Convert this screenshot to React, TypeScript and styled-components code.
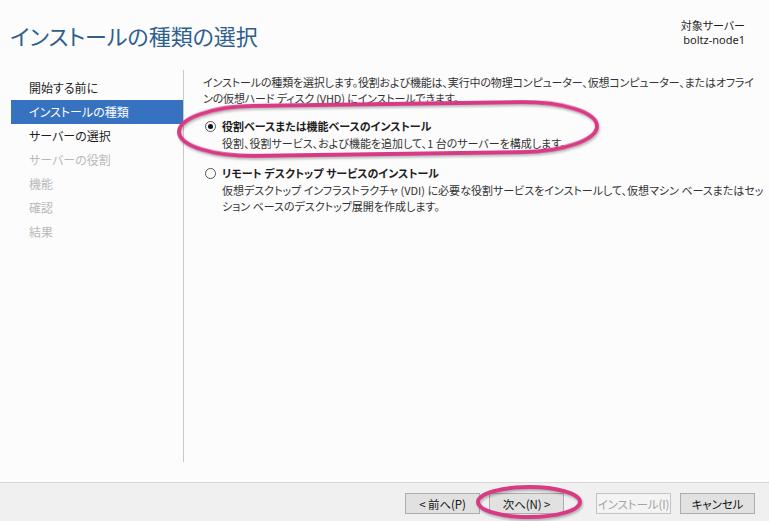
import React from 'react'
import styled, { createGlobalStyle } from 'styled-components'

const steps: { label: string; state: 'done' | 'active' | 'todo' }[] = [
  { label: '開始する前に', state: 'done' },
  { label: 'インストールの種類', state: 'active' },
  { label: 'サーバーの選択', state: 'done' },
  { label: 'サーバーの役割', state: 'todo' },
  { label: '機能', state: 'todo' },
  { label: '確認', state: 'todo' },
  { label: '結果', state: 'todo' },
]

const options = [
  {
    title: '役割ベースまたは機能ベースのインストール',
    desc: ['役割、役割サービス、および機能を追加して、1 台のサーバーを構成します。'],
    checked: true,
  },
  {
    title: 'リモート デスクトップ サービスのインストール',
    desc: [
      '仮想デスクトップ インフラストラクチャ (VDI) に必要な役割サービスをインストールして、仮想マシン ベースまたはセッ',
      'ション ベースのデスクトップ展開を作成します。',
    ],
    checked: false,
  },
]

const App: React.FC = () => {
  return (
    <Page>
      <GlobalStyle />
      <Header>
        <Title>インストールの種類の選択</Title>
        <Target>
          <div>対象サーバー</div>
          <div>boltz-node1</div>
        </Target>
      </Header>
      <Main>
        <Sidebar>
          {steps.map(s => (
            <Step key={s.label} state={s.state}>
              {s.label}
            </Step>
          ))}
        </Sidebar>
        <Content>
          <Intro>
            インストールの種類を選択します。役割および機能は、実行中の物理コンピューター、仮想コンピューター、またはオフライ
            <br />
            ンの仮想ハード ディスク (VHD) にインストールできます。
          </Intro>
          {options.map(o => (
            <Option key={o.title}>
              <Radio checked={o.checked} />
              <OptionBody>
                <OptionTitle>{o.title}</OptionTitle>
                {o.desc.map(d => (
                  <OptionDesc key={d}>{d}</OptionDesc>
                ))}
              </OptionBody>
            </Option>
          ))}
        </Content>
      </Main>
      <Footer>
        <ButtonGroup>
          <Button>&lt; 前へ(P)</Button>
          <Button>次へ(N) &gt;</Button>
        </ButtonGroup>
        <ButtonGroup>
          <Button disabled>インストール(I)</Button>
          <Button>キャンセル</Button>
        </ButtonGroup>
      </Footer>
      <Mark style={{ left: 174, top: 99, width: 428, height: 60 }} viewBox="0 0 428 60">
        <rect x="5" y="5" width="418" height="50" rx="75" ry="25" transform="rotate(-0.8 214 30)" />
      </Mark>
      <Mark style={{ left: 474, top: 483, width: 110, height: 38 }} viewBox="0 0 110 38">
        <ellipse cx="55" cy="19" rx="51" ry="15" />
      </Mark>
    </Page>
  )
}

export default App

const GlobalStyle = createGlobalStyle`
  body {
    margin: 0;
    background: #fcfcfc;
    font-family: "Noto Sans CJK JP", "Noto Sans", sans-serif;
    font-feature-settings: "palt";
  }
`

const Page = styled.div`
  position: relative;
  width: 769px;
  height: 521px;
  display: flex;
  flex-direction: column;
  background: #fcfcfc;
  overflow: hidden;
`

const Header = styled.div`
  height: 70px;
  flex: none;
  display: flex;
  justify-content: space-between;
  align-items: flex-start;
  padding: 0 24px 0 10px;
  box-sizing: border-box;
`

const Title = styled.h1`
  margin: 20px 0 0;
  font-size: 22px;
  font-weight: 400;
  line-height: 30px;
  color: #2f5f8f;
`

const Target = styled.div`
  margin-top: 19px;
  font-size: 11px;
  line-height: 14px;
  color: #1e1e1e;
  text-align: right;
  font-family: "Noto Sans", "Noto Sans CJK JP", sans-serif;
`

const Main = styled.div`
  flex: 1;
  display: flex;
  min-height: 0;
`

const Sidebar = styled.div`
  flex: none;
  width: 172px;
  margin: 0 0 20px 11px;
  padding-top: 6px;
  border-right: 1px solid #c9c9c9;
`

const Step = styled.div<{ state: 'done' | 'active' | 'todo' }>`
  height: 24px;
  line-height: 24px;
  padding-left: 18px;
  font-size: 12px;
  white-space: nowrap;
  background: ${p => (p.state === 'active' ? '#3672c0' : 'transparent')};
  color: ${p =>
    p.state === 'active' ? '#ffffff' : p.state === 'done' ? '#1e1e1e' : '#b9b9b9'};
`

const Content = styled.div`
  flex: 1;
  min-width: 0;
  padding: 4px 0 0 19px;
`

const Intro = styled.p`
  margin: 0 0 12px;
  font-size: 11px;
  letter-spacing: -0.15px;
  line-height: 16px;
  color: #333;
  white-space: nowrap;
`

const Option = styled.div`
  display: flex;
  align-items: flex-start;
  margin: 0 0 14px 2px;
`

const Radio = styled.span<{ checked: boolean }>`
  position: relative;
  flex: none;
  width: 9px;
  height: 9px;
  margin: 3px 6px 0 0;
  border: 1px solid #555;
  border-radius: 50%;
  background: #fff;
  &::after {
    content: '';
    display: ${p => (p.checked ? 'block' : 'none')};
    position: absolute;
    left: 2px;
    top: 2px;
    width: 5px;
    height: 5px;
    border-radius: 50%;
    background: #111;
  }
`

const OptionBody = styled.div`
  display: flex;
  flex-direction: column;
`

const OptionTitle = styled.div`
  font-size: 11px;
  line-height: 17px;
  font-weight: 700;
  color: #1e1e1e;
`

const OptionDesc = styled.div`
  font-size: 11px;
  letter-spacing: 0;
  line-height: 16px;
  color: #333;
  white-space: nowrap;
`

const Footer = styled.div`
  height: 39px;
  flex: none;
  display: flex;
  justify-content: flex-end;
  align-items: center;
  gap: 32px;
  padding: 3px 14px 0 0;
  box-sizing: border-box;
  border-top: 1px solid #d5d5d5;
  background: #f0f0f0;
`

const ButtonGroup = styled.div`
  display: flex;
  gap: 9px;
`

const Button = styled.button`
  width: 75px;
  height: 21px;
  padding: 0;
  white-space: nowrap;
  font-family: "Noto Sans CJK JP", "Noto Sans", sans-serif;
  font-feature-settings: "palt";
  font-size: 11.5px;
  letter-spacing: -0.1px;
  color: #111;
  background: #e1e1e1;
  border: 1px solid #adadad;
  &:disabled {
    color: #a3a3a3;
    background: #f4f4f4;
    border-color: #c3c3c3;
  }
`

const Mark = styled.svg`
  position: absolute;
  overflow: visible;
  pointer-events: none;
  ellipse,
  rect {
    fill: none;
    stroke: #d93a85;
    stroke-width: 4;
    filter: drop-shadow(1px 2px 1px rgba(0, 0, 0, 0.25));
  }
`
